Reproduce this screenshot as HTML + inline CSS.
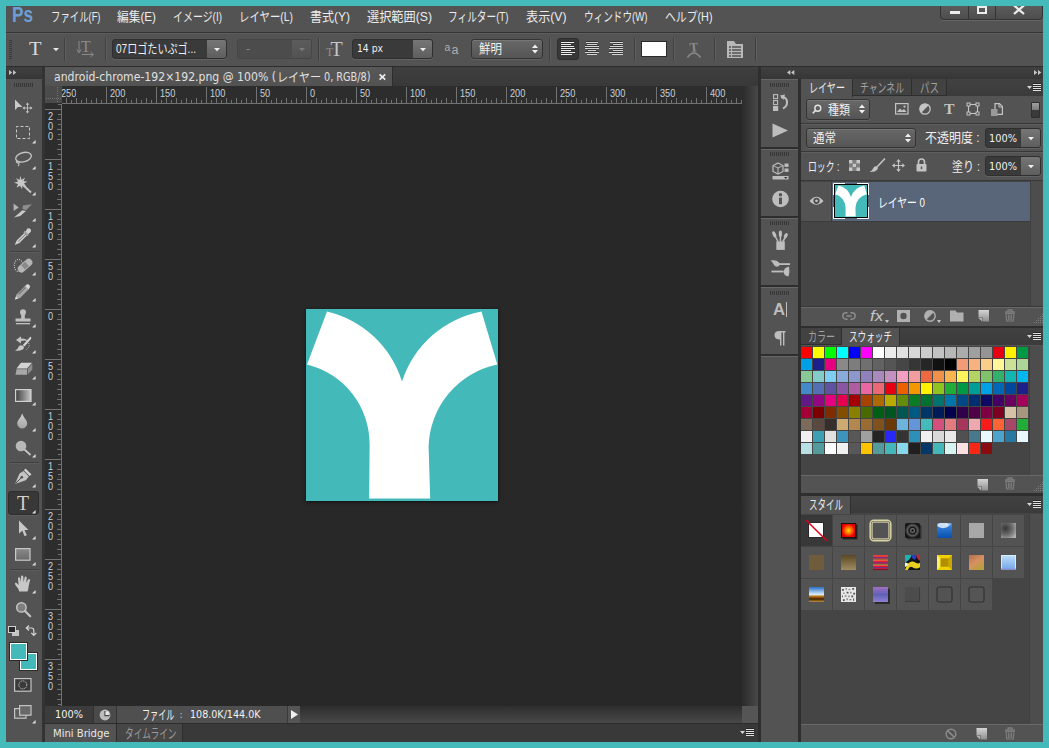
<!DOCTYPE html>
<html lang="ja"><head><meta charset="utf-8"><title>Photoshop</title>
<style>
html,body{margin:0;padding:0;}
body{width:1049px;height:748px;background:#44baba;overflow:hidden;position:relative;font-family:"Liberation Sans","Noto Sans CJK JP",sans-serif;}
#app div,#app svg,#app span{position:absolute;box-sizing:border-box;}
#app svg{overflow:visible;}
.t{white-space:nowrap;transform-origin:0 50%;display:block;}
</style></head>
<body><div id="app">
<div style="left:6px;top:6px;width:1037px;height:736px;background:#535353;"></div>
<div style="left:6px;top:32px;width:1037px;height:1px;background:#343434;"></div>
<span class="t" style="left:11.5px;top:0.5px;font-size:22px;line-height:28px;color:#6d9fd6;font-weight:bold;transform:scaleX(0.7800);">Ps</span>
<span class="t" style="left:51px;top:7.1px;font-size:13px;line-height:19px;color:#ececec;font-weight:normal;transform:scaleX(0.7215);">ファイル(F)</span>
<span class="t" style="left:117px;top:7.1px;font-size:13px;line-height:19px;color:#ececec;font-weight:normal;transform:scaleX(0.8998);">編集(E)</span>
<span class="t" style="left:172.5px;top:7.1px;font-size:13px;line-height:19px;color:#ececec;font-weight:normal;transform:scaleX(0.7654);">イメージ(I)</span>
<span class="t" style="left:239px;top:7.1px;font-size:13px;line-height:19px;color:#ececec;font-weight:normal;transform:scaleX(0.8000);">レイヤー(L)</span>
<span class="t" style="left:310px;top:7.1px;font-size:13px;line-height:19px;color:#ececec;font-weight:normal;transform:scaleX(0.9229);">書式(Y)</span>
<span class="t" style="left:367px;top:7.1px;font-size:13px;line-height:19px;color:#ececec;font-weight:normal;transform:scaleX(0.9374);">選択範囲(S)</span>
<span class="t" style="left:448px;top:7.1px;font-size:13px;line-height:19px;color:#ececec;font-weight:normal;transform:scaleX(0.7438);">フィルター(T)</span>
<span class="t" style="left:526px;top:7.1px;font-size:13px;line-height:19px;color:#ececec;font-weight:normal;transform:scaleX(0.9344);">表示(V)</span>
<span class="t" style="left:584px;top:7.1px;font-size:13px;line-height:19px;color:#ececec;font-weight:normal;transform:scaleX(0.7389);">ウィンドウ(W)</span>
<span class="t" style="left:665px;top:7.1px;font-size:13px;line-height:19px;color:#ececec;font-weight:normal;transform:scaleX(0.8326);">ヘルプ(H)</span>
<div style="left:940px;top:6px;width:103px;height:14px;border:1px solid #343434;border-top:none;border-radius:0 0 4px 4px;background:linear-gradient(#5c5c5c,#4d4d4d);box-shadow:0 1px 0 #676767;"></div>
<div style="left:968px;top:6px;width:1px;height:13px;background:#343434;"></div>
<div style="left:995px;top:6px;width:1px;height:13px;background:#343434;"></div>
<div style="left:950px;top:11px;width:10px;height:3px;background:#ececec;"></div>
<div style="left:977px;top:6px;width:10px;height:8px;border:2px solid #ececec;"></div>
<svg style="left:1013px;top:6px;overflow:hidden;" width="12" height="9" viewBox="0 0 12 9"><path d="M1 -0.6L11 8M11 -0.6L1 8" stroke="#ececec" stroke-width="2.3" fill="none"/></svg>
<div style="left:6px;top:66px;width:1037px;height:1px;background:#2c2c2c;"></div>
<div style="left:6px;top:33px;width:1037px;height:1px;background:#5e5e5e;"></div>
<div style="left:9px;top:40px;width:3px;height:20px;background:repeating-linear-gradient(#3a3a3a 0 1px,transparent 1px 2px);"></div>
<span class="t" style="left:28.6px;top:35.8px;font-size:19px;line-height:25px;color:#dcdcdc;font-weight:normal;font-family:'Liberation Serif',serif;transform:scaleX(1.0853);">T</span>
<svg style="left:52.5px;top:47.5px;" width="6" height="3" viewBox="0 0 6 3"><path d="M0 0H6L3 3.2Z" fill="#e6e6e6"/></svg>
<div style="left:64px;top:38px;width:1px;height:23px;background:#3f3f3f;"></div>
<div style="left:65px;top:38px;width:1px;height:23px;background:#5f5f5f;"></div>
<svg style="left:76px;top:40px;" width="20" height="18" viewBox="0 0 20 18"><text x="5" y="11.5" font-family="Liberation Serif,serif" font-size="16" fill="#8a8a8a">T</text><path d="M3 1V12.5M0.8 9.5L3 12.8L5.2 9.5" stroke="#8a8a8a" fill="none"/><path d="M6 14.5H17M14.5 12L17.5 14.5L14.5 17" stroke="#8a8a8a" fill="none"/></svg>
<div style="left:105px;top:38px;width:1px;height:23px;background:#3f3f3f;"></div>
<div style="left:106px;top:38px;width:1px;height:23px;background:#5f5f5f;"></div>
<div style="left:112px;top:39px;width:115px;height:20px;background:#3a3a3a;border:1px solid #2f2f2f;border-radius:3px;box-shadow:0 1px 0 #626262;"></div>
<div style="left:207px;top:40px;width:19px;height:18px;background:linear-gradient(#767676,#5e5e5e);border-radius:0 2px 2px 0;"></div>
<svg style="left:214px;top:47.5px;" width="6" height="3" viewBox="0 0 6 3"><path d="M0 0H6L3 3.2Z" fill="#f0f0f0"/></svg>
<span class="t" style="left:116px;top:39.0px;font-size:13px;line-height:19px;color:#f0f0f0;font-weight:normal;transform:scaleX(0.7745);">07ロゴたいぷゴ...</span>
<div style="left:237px;top:39px;width:75px;height:20px;background:#4c4c4c;border:1px solid #464646;border-radius:3px;"></div>
<div style="left:292px;top:40px;width:19px;height:18px;background:linear-gradient(#5c5c5c,#525252);border-radius:0 2px 2px 0;"></div>
<svg style="left:299px;top:47.5px;" width="6" height="3" viewBox="0 0 6 3"><path d="M0 0H6L3 3.2Z" fill="#7a7a7a"/></svg>
<span class="t" style="left:246px;top:39.5px;font-size:12px;line-height:18px;color:#8a8a8a;font-weight:normal;transform:scaleX(1.0000);">-</span>
<div style="left:318px;top:38px;width:1px;height:23px;background:#3f3f3f;"></div>
<div style="left:319px;top:38px;width:1px;height:23px;background:#5f5f5f;"></div>
<svg style="left:326px;top:40px;" width="20" height="18" viewBox="0 0 20 18"><text x="0" y="16" font-family="Liberation Serif,serif" font-size="12" fill="#8f8f8f">T</text><text x="4.5" y="16" font-family="Liberation Serif,serif" font-size="20" fill="#c4c4c4">T</text></svg>
<div style="left:352px;top:39px;width:81px;height:20px;background:#3a3a3a;border:1px solid #2f2f2f;border-radius:3px;box-shadow:0 1px 0 #626262;"></div>
<div style="left:413px;top:40px;width:19px;height:18px;background:linear-gradient(#767676,#5e5e5e);border-radius:0 2px 2px 0;"></div>
<svg style="left:420px;top:47.5px;" width="6" height="3" viewBox="0 0 6 3"><path d="M0 0H6L3 3.2Z" fill="#f0f0f0"/></svg>
<span class="t" style="left:357px;top:40.2px;font-size:11px;line-height:17px;color:#f0f0f0;font-weight:normal;font-family:'DejaVu Sans','Liberation Sans','Noto Sans CJK JP',sans-serif;transform:scaleX(0.8387);">14 px</span>
<svg style="left:444px;top:41px;" width="16" height="16" viewBox="0 0 16 16"><text x="0.5" y="10" font-family="Liberation Sans,sans-serif" font-size="10.5" fill="#b0b0b0">a</text><text x="7.5" y="13.3" font-family="Liberation Sans,sans-serif" font-size="12.5" fill="#b0b0b0">a</text></svg>
<div style="left:471px;top:39px;width:72px;height:20px;border:1px solid #343434;border-radius:3px;background:linear-gradient(#686868,#555555);box-shadow:0 1px 0 #626262, inset 0 1px 0 #767676;"></div>
<svg style="left:532px;top:44px;" width="6" height="10" viewBox="0 0 6 10"><path d="M0 4L3 0.5L6 4ZM0 6L3 9.5L6 6Z" fill="#f0f0f0"/></svg>
<span class="t" style="left:479px;top:39.0px;font-size:13px;line-height:19px;color:#f0f0f0;font-weight:normal;transform:scaleX(0.8841);">鮮明</span>
<div style="left:549px;top:38px;width:1px;height:23px;background:#3f3f3f;"></div>
<div style="left:550px;top:38px;width:1px;height:23px;background:#5f5f5f;"></div>
<div style="left:557px;top:38px;width:22px;height:22px;background:#383838;border-radius:3px;border:1px solid #2e2e2e;"></div>
<svg style="left:561px;top:42px;shape-rendering:crispEdges;" width="14" height="14" viewBox="0 0 14 14"><rect x="0" y="-1" width="13" height="1" fill="#2c2c2c" opacity=".75"/><rect x="0" y="0" width="13" height="1" fill="#ececec"/><rect x="0" y="1" width="10" height="1" fill="#2c2c2c" opacity=".75"/><rect x="0" y="2" width="10" height="1" fill="#ececec"/><rect x="0" y="3" width="13" height="1" fill="#2c2c2c" opacity=".75"/><rect x="0" y="4" width="13" height="1" fill="#ececec"/><rect x="0" y="5" width="14" height="1" fill="#2c2c2c" opacity=".75"/><rect x="0" y="6" width="14" height="1" fill="#ececec"/><rect x="0" y="7" width="10" height="1" fill="#2c2c2c" opacity=".75"/><rect x="0" y="8" width="10" height="1" fill="#ececec"/><rect x="0" y="9" width="14" height="1" fill="#2c2c2c" opacity=".75"/><rect x="0" y="10" width="14" height="1" fill="#ececec"/><rect x="0" y="11" width="11" height="1" fill="#2c2c2c" opacity=".75"/><rect x="0" y="12" width="11" height="1" fill="#ececec"/></svg>
<svg style="left:585px;top:42px;shape-rendering:crispEdges;" width="14" height="14" viewBox="0 0 14 14"><rect x="1.0" y="-1" width="12" height="1" fill="#2c2c2c" opacity=".75"/><rect x="1.0" y="0" width="12" height="1" fill="#d4d4d4"/><rect x="2.0" y="1" width="10" height="1" fill="#2c2c2c" opacity=".75"/><rect x="2.0" y="2" width="10" height="1" fill="#d4d4d4"/><rect x="0.0" y="3" width="14" height="1" fill="#2c2c2c" opacity=".75"/><rect x="0.0" y="4" width="14" height="1" fill="#d4d4d4"/><rect x="0.0" y="5" width="14" height="1" fill="#2c2c2c" opacity=".75"/><rect x="0.0" y="6" width="14" height="1" fill="#d4d4d4"/><rect x="3.0" y="7" width="8" height="1" fill="#2c2c2c" opacity=".75"/><rect x="3.0" y="8" width="8" height="1" fill="#d4d4d4"/><rect x="0.0" y="9" width="14" height="1" fill="#2c2c2c" opacity=".75"/><rect x="0.0" y="10" width="14" height="1" fill="#d4d4d4"/><rect x="2.0" y="11" width="10" height="1" fill="#2c2c2c" opacity=".75"/><rect x="2.0" y="12" width="10" height="1" fill="#d4d4d4"/></svg>
<svg style="left:609px;top:42px;shape-rendering:crispEdges;" width="14" height="14" viewBox="0 0 14 14"><rect x="1" y="-1" width="13" height="1" fill="#2c2c2c" opacity=".75"/><rect x="1" y="0" width="13" height="1" fill="#d4d4d4"/><rect x="4" y="1" width="10" height="1" fill="#2c2c2c" opacity=".75"/><rect x="4" y="2" width="10" height="1" fill="#d4d4d4"/><rect x="1" y="3" width="13" height="1" fill="#2c2c2c" opacity=".75"/><rect x="1" y="4" width="13" height="1" fill="#d4d4d4"/><rect x="0" y="5" width="14" height="1" fill="#2c2c2c" opacity=".75"/><rect x="0" y="6" width="14" height="1" fill="#d4d4d4"/><rect x="4" y="7" width="10" height="1" fill="#2c2c2c" opacity=".75"/><rect x="4" y="8" width="10" height="1" fill="#d4d4d4"/><rect x="0" y="9" width="14" height="1" fill="#2c2c2c" opacity=".75"/><rect x="0" y="10" width="14" height="1" fill="#d4d4d4"/><rect x="3" y="11" width="11" height="1" fill="#2c2c2c" opacity=".75"/><rect x="3" y="12" width="11" height="1" fill="#d4d4d4"/></svg>
<div style="left:634px;top:38px;width:1px;height:23px;background:#3f3f3f;"></div>
<div style="left:635px;top:38px;width:1px;height:23px;background:#5f5f5f;"></div>
<div style="left:641px;top:41px;width:26px;height:16px;background:#ffffff;border:1px solid #2a2a2a;"></div>
<div style="left:673px;top:38px;width:1px;height:23px;background:#3f3f3f;"></div>
<div style="left:674px;top:38px;width:1px;height:23px;background:#5f5f5f;"></div>
<svg style="left:686px;top:40px;" width="16" height="18" viewBox="0 0 16 18"><text x="3.5" y="11.5" font-family="Liberation Serif,serif" font-size="13" font-weight="bold" fill="#8c8c8c" transform="rotate(-6 8 8)">T</text><path d="M1.5 17.5Q8 8.5 14.5 17.5" stroke="#8c8c8c" fill="none" stroke-width="1.5"/></svg>
<div style="left:714px;top:38px;width:1px;height:23px;background:#3f3f3f;"></div>
<div style="left:715px;top:38px;width:1px;height:23px;background:#5f5f5f;"></div>
<svg style="left:727px;top:41px;" width="17" height="17" viewBox="0 0 17 17"><path d="M0 0H7L9 3H16V17H0Z" fill="#b8b8b8"/><path d="M2 6H14M2 9H14M2 12H14M2 15H14" stroke="#535353" stroke-width="1.4"/><path d="M4.5 5V16" stroke="#b8b8b8" stroke-width="1"/></svg>
<div style="left:755px;top:38px;width:1px;height:23px;background:#3f3f3f;"></div>
<div style="left:756px;top:38px;width:1px;height:23px;background:#5f5f5f;"></div>
<div style="left:6px;top:67px;width:37px;height:12px;background:linear-gradient(#404040,#363636);"></div>
<div style="left:42px;top:67px;width:3px;height:675px;background:#333333;"></div>
<svg style="left:9px;top:70px;" width="8" height="5" viewBox="0 0 8 5"><path d="M0 0L3.3 2.5L0 5ZM4 0L7.3 2.5L4 5Z" fill="#c0c0c0"/></svg>
<div style="left:14px;top:83px;width:20px;height:4px;background:repeating-linear-gradient(90deg,#363636 0 1px,transparent 1px 2px);"></div>
<svg style="left:14px;top:98px;" width="20" height="16" viewBox="0 0 20 16"><path d="M1 1.5L1 12L4 9L8.5 9Z" fill="#c8c8c8"/><path d="M13.5 5.5V14.5M9 10H18" stroke="#b8b8b8" stroke-width="1"/><path d="M13.5 4.5L11.7 6.8H15.3ZM13.5 15.5L11.7 13.2H15.3ZM8.5 10L10.8 8.2V11.8ZM18.5 10L16.2 8.2V11.8Z" fill="#c0c0c0"/></svg>
<svg style="left:16px;top:126px;" width="14" height="13" viewBox="0 0 14 13"><rect x="0.5" y="0.5" width="13" height="12" fill="none" stroke="#c8c8c8" stroke-width="1" stroke-dasharray="3 2" stroke-dashoffset="1"/></svg>
<svg style="left:32px;top:140px;" width="4" height="4" viewBox="0 0 4 4"><path d="M3.6 0V3.6H0Z" fill="#dcdcdc"/></svg>
<svg style="left:14px;top:151px;" width="19" height="16" viewBox="0 0 19 16"><ellipse cx="9.5" cy="6.2" rx="8" ry="4.6" fill="none" stroke="#c4c4c4" stroke-width="1.4" transform="rotate(-14 9.5 6.2)"/><path d="M3 9.5Q1.5 11 3.5 12Q5.5 12.5 5 10.5M4.8 12Q5.5 14 4 15" fill="none" stroke="#c4c4c4" stroke-width="1.1"/></svg>
<svg style="left:32px;top:166px;" width="4" height="4" viewBox="0 0 4 4"><path d="M3.6 0V3.6H0Z" fill="#dcdcdc"/></svg>
<svg style="left:13px;top:176px;" width="20" height="18" viewBox="0 0 20 18"><path d="M7.5 0L8.6 4L12 1.6L10.6 5.2L14.5 5.5L11 7.4L13.4 10.6L9.6 9.3L9 13L7 9.7L3.6 11.6L5 8L1 6.8L5 5.6L3 2L6.4 4Z" fill="#c8c8c8"/><path d="M10 9L18 16.5" stroke="#c8c8c8" stroke-width="1.8"/></svg>
<svg style="left:32px;top:192px;" width="4" height="4" viewBox="0 0 4 4"><path d="M3.6 0V3.6H0Z" fill="#dcdcdc"/></svg>
<svg style="left:13px;top:203px;" width="20" height="16" viewBox="0 0 20 16"><path d="M0.6 0.6L5.7 4.5L0.6 7.9Z" fill="#b4b4b4"/><path d="M9.8 2.5L18.9 1.3L13.1 7.2L9.4 5.7Z" fill="#8e8e8e"/><path d="M1 14.4L9.4 7.3L13 7.9L7.2 13.1Z" fill="#cacaca"/></svg>
<svg style="left:32px;top:218px;" width="4" height="4" viewBox="0 0 4 4"><path d="M3.6 0V3.6H0Z" fill="#dcdcdc"/></svg>
<svg style="left:15px;top:228px;" width="17" height="17" viewBox="0 0 17 17"><path d="M12.5 0.5Q15 -0.5 16 2Q16.5 4 14.5 5L13 6.5L10.2 3.7L11.5 2.2Q11.5 1 12.5 0.5Z" fill="#d0d0d0"/><path d="M9 3.5L13 7.5" stroke="#a0a0a0" stroke-width="2"/><path d="M9.8 5.5L2.5 12.8L1.2 15.5L4 14.3L11.3 7" fill="#6a6a6a" stroke="#d0d0d0" stroke-width="1.5"/></svg>
<svg style="left:32px;top:244px;" width="4" height="4" viewBox="0 0 4 4"><path d="M3.6 0V3.6H0Z" fill="#dcdcdc"/></svg>
<div style="left:10px;top:251px;width:29px;height:1px;background:#404040;"></div>
<div style="left:10px;top:252px;width:29px;height:1px;background:#5c5c5c;"></div>
<svg style="left:14px;top:257px;" width="19" height="18" viewBox="0 0 19 18"><ellipse cx="4.5" cy="8.5" rx="4.2" ry="6" fill="none" stroke="#d0d0d0" stroke-width="1.1" stroke-dasharray="1 1.2"/><rect x="2.6" y="5" width="17" height="7.4" rx="3.7" fill="#b4b4b4" transform="rotate(-42 11 8.7)"/><rect x="8.4" y="5.8" width="5.4" height="5.8" fill="#8a8a8a" transform="rotate(-42 11 8.7)"/></svg>
<svg style="left:32px;top:272px;" width="4" height="4" viewBox="0 0 4 4"><path d="M3.6 0V3.6H0Z" fill="#dcdcdc"/></svg>
<svg style="left:14px;top:283px;" width="18" height="18" viewBox="0 0 18 18"><path d="M1 16.5L2.5 11.5L11 3L14.5 6.5L6 15Z" fill="#a8a8a8"/><path d="M1 16.5L2 13.5L4 15.5Z" fill="#e8e8e8"/><path d="M11.8 2.2Q13.5 0.2 15.4 2Q17 3.8 15.2 5.6L14.5 6.4L11 3Z" fill="#d8d8d8"/><path d="M4.5 11.5L11.5 4.5" stroke="#7a7a7a" stroke-width="1.2"/></svg>
<svg style="left:32px;top:298px;" width="4" height="4" viewBox="0 0 4 4"><path d="M3.6 0V3.6H0Z" fill="#dcdcdc"/></svg>
<svg style="left:15px;top:309px;" width="16" height="17" viewBox="0 0 16 17"><path d="M8 0.3Q11 0.3 11 3.2Q11 5 9.8 6.3V9.5H15.5V12.5H0.5V9.5H6.2V6.3Q5 5 5 3.2Q5 0.3 8 0.3Z" fill="#c0c0c0"/><rect x="1" y="14" width="14" height="1.3" fill="#c0c0c0"/></svg>
<svg style="left:32px;top:324px;" width="4" height="4" viewBox="0 0 4 4"><path d="M3.6 0V3.6H0Z" fill="#dcdcdc"/></svg>
<svg style="left:14px;top:335px;" width="19" height="17" viewBox="0 0 19 17"><path d="M2 5L7 1.2V3.6Q12 3 14 6Q11 5 7 6V8.6Z" fill="#c4c4c4"/><path d="M16.5 1.5Q18 2.5 17 4L10.5 11.5L8.8 10Z" fill="#d4d4d4"/><path d="M8.5 10.5Q10.5 11.5 10 13Q8 16.5 1 15.5Q4 14 4.5 12Q5.5 9.5 8.5 10.5Z" fill="#c8c8c8"/><path d="M14.5 8Q16.5 12 12.5 14.5" fill="none" stroke="#d0d0d0" stroke-width="1" stroke-dasharray="1 1.2"/></svg>
<svg style="left:32px;top:350px;" width="4" height="4" viewBox="0 0 4 4"><path d="M3.6 0V3.6H0Z" fill="#dcdcdc"/></svg>
<svg style="left:15px;top:362px;" width="18" height="14" viewBox="0 0 18 14"><path d="M6 0.8H17L12 6.5H1.5Z" fill="#d4d4d4"/><path d="M1.5 7.2H12V12.8H0.5Z" fill="#a8a8a8"/><path d="M12.8 6.8L17.3 1.5V7.5L12.8 12.6Z" fill="#8c8c8c"/></svg>
<svg style="left:32px;top:376px;" width="4" height="4" viewBox="0 0 4 4"><path d="M3.6 0V3.6H0Z" fill="#dcdcdc"/></svg>
<svg style="left:15px;top:389px;" width="17" height="13" viewBox="0 0 17 13"><defs><linearGradient id="gg"><stop offset="0" stop-color="#3c3c3c"/><stop offset="1" stop-color="#c8c8c8"/></linearGradient></defs><rect x="0.6" y="0.6" width="15.4" height="11.8" fill="url(#gg)" stroke="#d0d0d0" stroke-width="1.2"/></svg>
<svg style="left:32px;top:402px;" width="4" height="4" viewBox="0 0 4 4"><path d="M3.6 0V3.6H0Z" fill="#dcdcdc"/></svg>
<svg style="left:16px;top:413px;" width="13" height="16" viewBox="0 0 13 16"><defs><linearGradient id="gd" x2="0" y2="1"><stop offset="0" stop-color="#d0d0d0"/><stop offset="1" stop-color="#a4a4a4"/></linearGradient></defs><path d="M6.2 0.5Q7.5 4 10.2 7.2Q12 10 10.8 12.6Q9.4 15.4 6.2 15.4Q3 15.4 1.6 12.6Q0.4 10 2.2 7.2Q5 4 6.2 0.5Z" fill="url(#gd)"/></svg>
<svg style="left:32px;top:428px;" width="4" height="4" viewBox="0 0 4 4"><path d="M3.6 0V3.6H0Z" fill="#dcdcdc"/></svg>
<svg style="left:15px;top:440px;" width="17" height="17" viewBox="0 0 17 17"><circle cx="6" cy="6" r="5.3" fill="#b8b8b8"/><path d="M9.5 9.5L15.5 15" stroke="#c4c4c4" stroke-width="1.8"/></svg>
<svg style="left:32px;top:454px;" width="4" height="4" viewBox="0 0 4 4"><path d="M3.6 0V3.6H0Z" fill="#dcdcdc"/></svg>
<div style="left:10px;top:462px;width:29px;height:1px;background:#404040;"></div>
<div style="left:10px;top:463px;width:29px;height:1px;background:#5c5c5c;"></div>
<svg style="left:14px;top:467px;" width="19" height="18" viewBox="0 0 19 18"><path d="M11.5 1.5L17.5 7.5L15.5 9L10 3.2Z" fill="#d4d4d4"/><path d="M9.6 4L14.8 9.4L11.8 13.2L1 17L5.5 6.5Z" fill="#c4c4c4"/><path d="M1.5 16.5L7.2 10.8" stroke="#4a4a4a" stroke-width="1"/><circle cx="7.8" cy="10.2" r="1.3" fill="#4a4a4a"/></svg>
<svg style="left:32px;top:484px;" width="4" height="4" viewBox="0 0 4 4"><path d="M3.6 0V3.6H0Z" fill="#dcdcdc"/></svg>
<div style="left:8px;top:491px;width:31px;height:24px;background:#383838;border:1px solid #2d2d2d;border-radius:3px;box-shadow:0 1px 0 #5e5e5e;"></div>
<span class="t" style="left:17px;top:489.5px;font-size:20px;line-height:26px;color:#d0d0d0;font-weight:normal;font-family:'Liberation Serif',serif;transform:scaleX(0.9821);">T</span>
<svg style="left:32px;top:510px;" width="4" height="4" viewBox="0 0 4 4"><path d="M3.6 0V3.6H0Z" fill="#dcdcdc"/></svg>
<svg style="left:18px;top:520px;" width="12" height="17" viewBox="0 0 12 17"><path d="M1 0.5V13.5L4.3 10.8L6.6 16.3L8.8 15.3L6.5 10H10.5Z" fill="#c8c8c8"/></svg>
<svg style="left:32px;top:536px;" width="4" height="4" viewBox="0 0 4 4"><path d="M3.6 0V3.6H0Z" fill="#dcdcdc"/></svg>
<svg style="left:15px;top:548px;" width="16" height="13" viewBox="0 0 16 13"><defs><linearGradient id="gr" x2="0" y2="1"><stop offset="0" stop-color="#8a8a8a"/><stop offset="1" stop-color="#6a6a6a"/></linearGradient></defs><rect x="0.6" y="0.6" width="14.4" height="11.6" fill="url(#gr)" stroke="#c8c8c8" stroke-width="1.2"/></svg>
<svg style="left:32px;top:562px;" width="4" height="4" viewBox="0 0 4 4"><path d="M3.6 0V3.6H0Z" fill="#dcdcdc"/></svg>
<div style="left:10px;top:569px;width:29px;height:1px;background:#404040;"></div>
<div style="left:10px;top:570px;width:29px;height:1px;background:#5c5c5c;"></div>
<svg style="left:14px;top:575px;" width="18" height="17" viewBox="0 0 18 17"><path d="M5.2 16.5Q4.6 13.5 1.8 10.5Q0.2 8.4 1.2 7.8Q2.4 7.2 4.6 10L4 3.4Q4 2.2 5 2.2Q6 2.2 6.2 3.4L6.8 7.4L7 1.8Q7 0.6 8.1 0.6Q9.2 0.6 9.3 1.8L9.6 7.2L10.6 2.4Q10.8 1.4 11.8 1.5Q12.8 1.7 12.7 2.8L12.3 8L14 4.6Q14.5 3.7 15.4 4Q16.2 4.4 16 5.4Q14.8 9.5 14.6 11.8Q14.4 14.4 13.6 16.5Z" fill="#c8c8c8"/></svg>
<svg style="left:32px;top:590px;" width="4" height="4" viewBox="0 0 4 4"><path d="M3.6 0V3.6H0Z" fill="#dcdcdc"/></svg>
<svg style="left:15px;top:601px;" width="17" height="17" viewBox="0 0 17 17"><circle cx="6.4" cy="6.4" r="4.7" fill="#7e7e7e" stroke="#c4c4c4" stroke-width="1.5"/><path d="M10 10L15.2 15.2" stroke="#c4c4c4" stroke-width="2.2" stroke-linecap="round"/></svg>
<div style="left:12px;top:630px;width:7px;height:6px;background:#c4c4c4;"></div>
<div style="left:8px;top:626px;width:8px;height:7px;background:#2a2a2a;border:1px solid #d0d0d0;"></div>
<svg style="left:26px;top:625px;" width="11" height="11" viewBox="0 0 11 11"><path d="M3 0.5L0.3 3L3 5.5M0.8 3H5.5Q7.8 3 7.8 5.5V10M5.3 7.8L7.8 10.4L10.3 7.8" stroke="#d4d4d4" stroke-width="1.2" fill="none"/></svg>
<div style="left:20px;top:653px;width:17px;height:17px;background:#44b9ba;border:1px solid #fff;outline:1px solid #2a2a2a;"></div>
<div style="left:10px;top:643px;width:17px;height:17px;background:#44b9ba;border:1px solid #fff;outline:1px solid #2a2a2a;"></div>
<svg style="left:14px;top:678px;" width="18" height="14" viewBox="0 0 18 14"><rect x="0.6" y="0.6" width="16.4" height="12.6" fill="#3a3a3a" stroke="#c4c4c4" stroke-width="1.2"/><circle cx="8.8" cy="6.9" r="4" fill="none" stroke="#e8e8e8" stroke-width="1" stroke-dasharray="1 1.1"/></svg>
<svg style="left:14px;top:705px;" width="18" height="15" viewBox="0 0 18 15"><rect x="0.6" y="3.6" width="11.4" height="9.6" fill="#5e5e5e" stroke="#c4c4c4" stroke-width="1.2"/><rect x="5.6" y="0.6" width="11.4" height="9.6" fill="#686868" stroke="#c4c4c4" stroke-width="1.2"/></svg>
<svg style="left:32px;top:720px;" width="4" height="4" viewBox="0 0 4 4"><path d="M3.6 0V3.6H0Z" fill="#dcdcdc"/></svg>
<div style="left:45px;top:67px;width:713px;height:20px;background:linear-gradient(#3f3f3f,#383838);"></div>
<div style="left:45px;top:67px;width:348px;height:20px;background:linear-gradient(#585858,#525252);border-right:1px solid #2e2e2e;"></div>
<span class="t" style="left:54px;top:69.2px;font-size:11.5px;line-height:17.5px;color:#e0e0e0;font-weight:normal;font-family:'DejaVu Sans','Liberation Sans','Noto Sans CJK JP',sans-serif;transform:scaleX(0.9476);">android-chrome-192×192.png @ 100% (</span>
<span class="t" style="left:276.5px;top:68.8px;font-size:12.5px;line-height:18.5px;color:#e4e4e4;font-weight:normal;transform:scaleX(0.8864);">レイヤー</span>
<span class="t" style="left:324px;top:69.2px;font-size:11.5px;line-height:17.5px;color:#e0e0e0;font-weight:normal;font-family:'DejaVu Sans','Liberation Sans','Noto Sans CJK JP',sans-serif;transform:scaleX(0.8438);">0, RGB/8)</span>
<svg style="left:378.5px;top:73.5px;" width="7" height="6" viewBox="0 0 7 6"><path d="M0.6 0.4L6.2 5.6M6.2 0.4L0.6 5.6" stroke="#f0f0f0" stroke-width="1.6"/></svg>
<div style="left:758px;top:67px;width:3px;height:675px;background:#2e2e2e;"></div>
<div style="left:45px;top:86px;width:713px;height:18px;background:#2d2d2d;"></div>
<div style="left:45px;top:86px;width:17px;height:637px;background:#2d2d2d;"></div>
<div style="left:45px;top:86px;width:17px;height:17px;background:#4b4b4b;"></div>
<svg style="left:45px;top:86px;" width="17" height="17" viewBox="0 0 17 17"><path d="M12.5 1V16M1 12.5H16" stroke="#6e6e6e" stroke-width="1" stroke-dasharray="1 1"/></svg>
<div style="left:62px;top:104px;width:680px;height:602px;background:#282828;"></div>
<svg style="left:0px;top:0px;" width="1049" height="748" viewBox="0 0 1049 748"><path d="M66.5 98V103M71.5 100V103M76.5 98V103M81.5 100V103M86.5 98V103M91.5 100V103M96.5 98V103M101.5 100V103M106.5 87V103M111.5 100V103M116.5 98V103M121.5 100V103M126.5 98V103M131.5 100V103M136.5 98V103M141.5 100V103M146.5 98V103M151.5 100V103M156.5 87V103M161.5 100V103M166.5 98V103M171.5 100V103M176.5 98V103M181.5 100V103M186.5 98V103M191.5 100V103M196.5 98V103M201.5 100V103M206.5 87V103M211.5 100V103M216.5 98V103M221.5 100V103M226.5 98V103M231.5 100V103M236.5 98V103M241.5 100V103M246.5 98V103M251.5 100V103M256.5 87V103M261.5 100V103M266.5 98V103M271.5 100V103M276.5 98V103M281.5 100V103M286.5 98V103M291.5 100V103M296.5 98V103M301.5 100V103M306.5 87V103M311.5 100V103M316.5 98V103M321.5 100V103M326.5 98V103M331.5 100V103M336.5 98V103M341.5 100V103M346.5 98V103M351.5 100V103M356.5 87V103M361.5 100V103M366.5 98V103M371.5 100V103M376.5 98V103M381.5 100V103M386.5 98V103M391.5 100V103M396.5 98V103M401.5 100V103M406.5 87V103M411.5 100V103M416.5 98V103M421.5 100V103M426.5 98V103M431.5 100V103M436.5 98V103M441.5 100V103M446.5 98V103M451.5 100V103M456.5 87V103M461.5 100V103M466.5 98V103M471.5 100V103M476.5 98V103M481.5 100V103M486.5 98V103M491.5 100V103M496.5 98V103M501.5 100V103M506.5 87V103M511.5 100V103M516.5 98V103M521.5 100V103M526.5 98V103M531.5 100V103M536.5 98V103M541.5 100V103M546.5 98V103M551.5 100V103M556.5 87V103M561.5 100V103M566.5 98V103M571.5 100V103M576.5 98V103M581.5 100V103M586.5 98V103M591.5 100V103M596.5 98V103M601.5 100V103M606.5 87V103M611.5 100V103M616.5 98V103M621.5 100V103M626.5 98V103M631.5 100V103M636.5 98V103M641.5 100V103M646.5 98V103M651.5 100V103M656.5 87V103M661.5 100V103M666.5 98V103M671.5 100V103M676.5 98V103M681.5 100V103M686.5 98V103M691.5 100V103M696.5 98V103M701.5 100V103M706.5 87V103M711.5 100V103M716.5 98V103M721.5 100V103M726.5 98V103M731.5 100V103M736.5 98V103M741.5 100V103" stroke="#727272" stroke-width="1" fill="none" shape-rendering="crispEdges"/><path d="M62 103.5H742M61.5 104V706" stroke="#727272" stroke-width="1" fill="none" shape-rendering="crispEdges"/></svg>
<svg style="left:0px;top:0px;" width="1049" height="748" viewBox="0 0 1049 748"><path d="M58 104.5H61M45 109.5H61M58 114.5H61M56.5 119.5H61M58 124.5H61M56.5 129.5H61M58 134.5H61M56.5 139.5H61M58 144.5H61M56.5 149.5H61M58 154.5H61M45 159.5H61M58 164.5H61M56.5 169.5H61M58 174.5H61M56.5 179.5H61M58 184.5H61M56.5 189.5H61M58 194.5H61M56.5 199.5H61M58 204.5H61M45 209.5H61M58 214.5H61M56.5 219.5H61M58 224.5H61M56.5 229.5H61M58 234.5H61M56.5 239.5H61M58 244.5H61M56.5 249.5H61M58 254.5H61M45 259.5H61M58 264.5H61M56.5 269.5H61M58 274.5H61M56.5 279.5H61M58 284.5H61M56.5 289.5H61M58 294.5H61M56.5 299.5H61M58 304.5H61M45 309.5H61M58 314.5H61M56.5 319.5H61M58 324.5H61M56.5 329.5H61M58 334.5H61M56.5 339.5H61M58 344.5H61M56.5 349.5H61M58 354.5H61M45 359.5H61M58 364.5H61M56.5 369.5H61M58 374.5H61M56.5 379.5H61M58 384.5H61M56.5 389.5H61M58 394.5H61M56.5 399.5H61M58 404.5H61M45 409.5H61M58 414.5H61M56.5 419.5H61M58 424.5H61M56.5 429.5H61M58 434.5H61M56.5 439.5H61M58 444.5H61M56.5 449.5H61M58 454.5H61M45 459.5H61M58 464.5H61M56.5 469.5H61M58 474.5H61M56.5 479.5H61M58 484.5H61M56.5 489.5H61M58 494.5H61M56.5 499.5H61M58 504.5H61M45 509.5H61M58 514.5H61M56.5 519.5H61M58 524.5H61M56.5 529.5H61M58 534.5H61M56.5 539.5H61M58 544.5H61M56.5 549.5H61M58 554.5H61M45 559.5H61M58 564.5H61M56.5 569.5H61M58 574.5H61M56.5 579.5H61M58 584.5H61M56.5 589.5H61M58 594.5H61M56.5 599.5H61M58 604.5H61M45 609.5H61M58 614.5H61M56.5 619.5H61M58 624.5H61M56.5 629.5H61M58 634.5H61M56.5 639.5H61M58 644.5H61M56.5 649.5H61M58 654.5H61M45 659.5H61M58 664.5H61M56.5 669.5H61M58 674.5H61M56.5 679.5H61M58 684.5H61M56.5 689.5H61M58 694.5H61M56.5 699.5H61M58 704.5H61" stroke="#727272" stroke-width="1" fill="none" shape-rendering="crispEdges"/></svg>
<span class="t" style="left:60.7px;top:87.8px;font-size:10.5px;line-height:11px;color:#c8d0d8;transform:scaleX(.876);clip-path:inset(0 0 0 1px);">250</span>
<span class="t" style="left:110px;top:87.8px;font-size:10.5px;line-height:11px;color:#c8d0d8;transform:scaleX(.876);">200</span>
<span class="t" style="left:160px;top:87.8px;font-size:10.5px;line-height:11px;color:#c8d0d8;transform:scaleX(.876);">150</span>
<span class="t" style="left:210px;top:87.8px;font-size:10.5px;line-height:11px;color:#c8d0d8;transform:scaleX(.876);">100</span>
<span class="t" style="left:260px;top:87.8px;font-size:10.5px;line-height:11px;color:#c8d0d8;transform:scaleX(.876);">50</span>
<span class="t" style="left:310px;top:87.8px;font-size:10.5px;line-height:11px;color:#c8d0d8;transform:scaleX(.876);">0</span>
<span class="t" style="left:360px;top:87.8px;font-size:10.5px;line-height:11px;color:#c8d0d8;transform:scaleX(.876);">50</span>
<span class="t" style="left:410px;top:87.8px;font-size:10.5px;line-height:11px;color:#c8d0d8;transform:scaleX(.876);">100</span>
<span class="t" style="left:460px;top:87.8px;font-size:10.5px;line-height:11px;color:#c8d0d8;transform:scaleX(.876);">150</span>
<span class="t" style="left:510px;top:87.8px;font-size:10.5px;line-height:11px;color:#c8d0d8;transform:scaleX(.876);">200</span>
<span class="t" style="left:560px;top:87.8px;font-size:10.5px;line-height:11px;color:#c8d0d8;transform:scaleX(.876);">250</span>
<span class="t" style="left:610px;top:87.8px;font-size:10.5px;line-height:11px;color:#c8d0d8;transform:scaleX(.876);">300</span>
<span class="t" style="left:660px;top:87.8px;font-size:10.5px;line-height:11px;color:#c8d0d8;transform:scaleX(.876);">350</span>
<span class="t" style="left:710px;top:87.8px;font-size:10.5px;line-height:11px;color:#c8d0d8;transform:scaleX(.876);">400</span>
<span class="t" style="left:47.8px;top:110.9px;font-size:10.5px;line-height:11px;color:#c8d0d8;transform:scaleX(.876);">2</span>
<span class="t" style="left:47.8px;top:120.9px;font-size:10.5px;line-height:11px;color:#c8d0d8;transform:scaleX(.876);">0</span>
<span class="t" style="left:47.8px;top:130.9px;font-size:10.5px;line-height:11px;color:#c8d0d8;transform:scaleX(.876);">0</span>
<span class="t" style="left:47.8px;top:160.9px;font-size:10.5px;line-height:11px;color:#c8d0d8;transform:scaleX(.876);">1</span>
<span class="t" style="left:47.8px;top:170.9px;font-size:10.5px;line-height:11px;color:#c8d0d8;transform:scaleX(.876);">5</span>
<span class="t" style="left:47.8px;top:180.9px;font-size:10.5px;line-height:11px;color:#c8d0d8;transform:scaleX(.876);">0</span>
<span class="t" style="left:47.8px;top:210.9px;font-size:10.5px;line-height:11px;color:#c8d0d8;transform:scaleX(.876);">1</span>
<span class="t" style="left:47.8px;top:220.9px;font-size:10.5px;line-height:11px;color:#c8d0d8;transform:scaleX(.876);">0</span>
<span class="t" style="left:47.8px;top:230.9px;font-size:10.5px;line-height:11px;color:#c8d0d8;transform:scaleX(.876);">0</span>
<span class="t" style="left:47.8px;top:260.9px;font-size:10.5px;line-height:11px;color:#c8d0d8;transform:scaleX(.876);">5</span>
<span class="t" style="left:47.8px;top:270.9px;font-size:10.5px;line-height:11px;color:#c8d0d8;transform:scaleX(.876);">0</span>
<span class="t" style="left:47.8px;top:310.9px;font-size:10.5px;line-height:11px;color:#c8d0d8;transform:scaleX(.876);">0</span>
<span class="t" style="left:47.8px;top:360.9px;font-size:10.5px;line-height:11px;color:#c8d0d8;transform:scaleX(.876);">5</span>
<span class="t" style="left:47.8px;top:370.9px;font-size:10.5px;line-height:11px;color:#c8d0d8;transform:scaleX(.876);">0</span>
<span class="t" style="left:47.8px;top:410.9px;font-size:10.5px;line-height:11px;color:#c8d0d8;transform:scaleX(.876);">1</span>
<span class="t" style="left:47.8px;top:420.9px;font-size:10.5px;line-height:11px;color:#c8d0d8;transform:scaleX(.876);">0</span>
<span class="t" style="left:47.8px;top:430.9px;font-size:10.5px;line-height:11px;color:#c8d0d8;transform:scaleX(.876);">0</span>
<span class="t" style="left:47.8px;top:460.9px;font-size:10.5px;line-height:11px;color:#c8d0d8;transform:scaleX(.876);">1</span>
<span class="t" style="left:47.8px;top:470.9px;font-size:10.5px;line-height:11px;color:#c8d0d8;transform:scaleX(.876);">5</span>
<span class="t" style="left:47.8px;top:480.9px;font-size:10.5px;line-height:11px;color:#c8d0d8;transform:scaleX(.876);">0</span>
<span class="t" style="left:47.8px;top:510.9px;font-size:10.5px;line-height:11px;color:#c8d0d8;transform:scaleX(.876);">2</span>
<span class="t" style="left:47.8px;top:520.9px;font-size:10.5px;line-height:11px;color:#c8d0d8;transform:scaleX(.876);">0</span>
<span class="t" style="left:47.8px;top:530.9px;font-size:10.5px;line-height:11px;color:#c8d0d8;transform:scaleX(.876);">0</span>
<span class="t" style="left:47.8px;top:560.9px;font-size:10.5px;line-height:11px;color:#c8d0d8;transform:scaleX(.876);">2</span>
<span class="t" style="left:47.8px;top:570.9px;font-size:10.5px;line-height:11px;color:#c8d0d8;transform:scaleX(.876);">5</span>
<span class="t" style="left:47.8px;top:580.9px;font-size:10.5px;line-height:11px;color:#c8d0d8;transform:scaleX(.876);">0</span>
<span class="t" style="left:47.8px;top:610.9px;font-size:10.5px;line-height:11px;color:#c8d0d8;transform:scaleX(.876);">3</span>
<span class="t" style="left:47.8px;top:620.9px;font-size:10.5px;line-height:11px;color:#c8d0d8;transform:scaleX(.876);">0</span>
<span class="t" style="left:47.8px;top:630.9px;font-size:10.5px;line-height:11px;color:#c8d0d8;transform:scaleX(.876);">0</span>
<span class="t" style="left:47.8px;top:660.9px;font-size:10.5px;line-height:11px;color:#c8d0d8;transform:scaleX(.876);">3</span>
<span class="t" style="left:47.8px;top:670.9px;font-size:10.5px;line-height:11px;color:#c8d0d8;transform:scaleX(.876);">5</span>
<span class="t" style="left:47.8px;top:680.9px;font-size:10.5px;line-height:11px;color:#c8d0d8;transform:scaleX(.876);">0</span>
<div style="left:306px;top:309px;width:192px;height:192px;background:#44b9ba;box-shadow:0 1px 3px rgba(0,0,0,.6);"></div>
<svg style="left:306px;top:309px;" width="192" height="192" viewBox="0 0 192 192"><path d="M21 2.6A103 103 0 0 1 96 72.5A103 103 0 0 1 175.5 2.6L191.3 55.5A86 86 0 0 0 122.6 138L124.2 189.4L63.2 189.4L63.6 136A82 82 0 0 0 1 55.5Z" fill="#ffffff"/></svg>
<div style="left:742px;top:86px;width:16px;height:620px;background:linear-gradient(90deg,#2b2b2b,#484848);"></div>
<div style="left:300px;top:706px;width:442px;height:17px;background:linear-gradient(#2e2e2e,#484848);"></div>
<div style="left:742px;top:706px;width:16px;height:17px;background:#555555;"></div>
<div style="left:45px;top:706px;width:48px;height:17px;background:#3c3c3c;"></div>
<div style="left:93px;top:706px;width:24px;height:17px;background:#4a4a4a;border-left:1px solid #333;border-right:1px solid #333;"></div>
<div style="left:117px;top:706px;width:170px;height:17px;background:#4f4f4f;"></div>
<div style="left:287px;top:706px;width:13px;height:17px;background:#555;border-left:1px solid #3a3a3a;"></div>
<span class="t" style="left:55px;top:706.2px;font-size:11px;line-height:17px;color:#f2f2f2;font-weight:normal;font-family:'DejaVu Sans','Liberation Sans','Noto Sans CJK JP',sans-serif;transform:scaleX(0.8902);">100%</span>
<svg style="left:99px;top:709px;" width="12" height="12" viewBox="0 0 12 12"><circle cx="6" cy="6" r="5.4" fill="#bdbdbd"/><path d="M6 2V6.5H10.5" stroke="#4a4a4a" stroke-width="1.3" fill="none"/><path d="M6.6 2.6H9.8V6H6.6Z" fill="#e8e8e8"/></svg>
<span class="t" style="left:142px;top:705.0px;font-size:13px;line-height:19px;color:#f2f2f2;font-weight:normal;transform:scaleX(0.6248);">ファイル</span>
<span class="t" style="left:179.8px;top:706.0px;font-size:11px;line-height:17px;color:#f2f2f2;font-weight:normal;font-family:'DejaVu Sans','Liberation Sans','Noto Sans CJK JP',sans-serif;transform:scaleX(0.5916);">:</span>
<span class="t" style="left:190px;top:706.2px;font-size:11px;line-height:17px;color:#f2f2f2;font-weight:normal;font-family:'DejaVu Sans','Liberation Sans','Noto Sans CJK JP',sans-serif;transform:scaleX(0.8690);">108.0K/144.0K</span>
<svg style="left:291px;top:710px;" width="7" height="9" viewBox="0 0 7 9"><path d="M0 0L7 4.5L0 9Z" fill="#f0f0f0"/></svg>
<div style="left:45px;top:723px;width:713px;height:1px;background:#2c2c2c;"></div>
<div style="left:45px;top:724px;width:713px;height:18px;background:#393939;"></div>
<div style="left:45px;top:724px;width:72px;height:18px;background:#535353;border-right:1px solid #2e2e2e;"></div>
<div style="left:117px;top:724px;width:66px;height:18px;background:#464646;border-right:1px solid #2e2e2e;"></div>
<span class="t" style="left:53px;top:725.0px;font-size:11px;line-height:17px;color:#e8e8e8;font-weight:normal;font-family:'DejaVu Sans','Liberation Sans','Noto Sans CJK JP',sans-serif;transform:scaleX(0.9122);">Mini Bridge</span>
<span class="t" style="left:125px;top:724.0px;font-size:13px;line-height:19px;color:#9a9a9a;font-weight:normal;transform:scaleX(0.6680);">タイムライン</span>
<svg style="left:740px;top:729px;" width="14" height="7" viewBox="0 0 14 7"><path d="M0 2H5L2.5 5Z" fill="#d8d8d8"/><path d="M6 -0.5H14M6 1.5H14M6 3.5H14M6 5.5H14" stroke="#262626" stroke-width="1" shape-rendering="crispEdges"/><path d="M6 0.5H14M6 2.5H14M6 4.5H14M6 6.5H14" stroke="#e0e0e0" stroke-width="1" shape-rendering="crispEdges"/></svg>
<div style="left:761px;top:67px;width:282px;height:12px;background:linear-gradient(#404040,#363636);"></div>
<svg style="left:786.5px;top:70px;" width="8" height="5" viewBox="0 0 8 5"><path d="M3.3 0L0 2.5L3.3 5ZM7.3 0L4 2.5L7.3 5Z" fill="#c8c8c8"/></svg>
<svg style="left:1034px;top:70px;" width="8" height="5" viewBox="0 0 8 5"><path d="M0 0L3.3 2.5L0 5ZM4 0L7.3 2.5L4 5Z" fill="#c8c8c8"/></svg>
<div style="left:761px;top:79px;width:37px;height:663px;background:#535353;"></div>
<div style="left:798px;top:79px;width:3px;height:663px;background:#2e2e2e;"></div>
<div style="left:761px;top:146.5px;width:37px;height:2px;background:#2e2e2e;"></div>
<div style="left:761px;top:215.5px;width:37px;height:2px;background:#2e2e2e;"></div>
<div style="left:761px;top:284.5px;width:37px;height:2px;background:#2e2e2e;"></div>
<div style="left:761px;top:354px;width:37px;height:2px;background:#2e2e2e;"></div>
<div style="left:761px;top:79px;width:37px;height:1px;background:#676767;"></div>
<div style="left:761px;top:148.5px;width:37px;height:1px;background:#676767;"></div>
<div style="left:761px;top:217.5px;width:37px;height:1px;background:#676767;"></div>
<div style="left:761px;top:286.5px;width:37px;height:1px;background:#676767;"></div>
<div style="left:761px;top:356px;width:37px;height:1px;background:#676767;"></div>
<div style="left:770px;top:83px;width:20px;height:4px;background:repeating-linear-gradient(90deg,#363636 0 1px,transparent 1px 2px);"></div>
<div style="left:770px;top:152px;width:20px;height:4px;background:repeating-linear-gradient(90deg,#363636 0 1px,transparent 1px 2px);"></div>
<div style="left:770px;top:221px;width:20px;height:4px;background:repeating-linear-gradient(90deg,#363636 0 1px,transparent 1px 2px);"></div>
<div style="left:770px;top:290.5px;width:20px;height:4px;background:repeating-linear-gradient(90deg,#363636 0 1px,transparent 1px 2px);"></div>
<svg style="left:773px;top:94px;" width="16" height="17" viewBox="0 0 16 17"><rect x="0.6" y="0.6" width="4" height="4" fill="none" stroke="#bdbdbd" stroke-width="1.1"/><rect x="0.6" y="6.6" width="4" height="4" fill="none" stroke="#bdbdbd" stroke-width="1.1"/><rect x="0" y="12" width="5.2" height="5" fill="#bdbdbd"/><path d="M8 3.5Q14 2.5 14 8.5Q14 12.5 10 14.5" fill="none" stroke="#bdbdbd" stroke-width="2"/><path d="M7 1.5L12 0.5L10.5 6Z" fill="#bdbdbd"/></svg>
<svg style="left:772px;top:123px;" width="17" height="15" viewBox="0 0 17 15"><path d="M0.5 0.5L16 7.5L0.5 14.5Z" fill="#bdbdbd"/></svg>
<svg style="left:772px;top:162px;" width="17" height="18" viewBox="0 0 17 18"><path d="M6 1L11 3.5V9.5L6 12L1 9.5V3.5Z" fill="none" stroke="#bdbdbd" stroke-width="1.2"/><path d="M1 3.5L6 6L11 3.5M6 6V12" fill="none" stroke="#bdbdbd" stroke-width="1"/><rect x="12.5" y="1.5" width="4" height="3.4" fill="#bdbdbd"/><rect x="12.5" y="6.5" width="4" height="3.4" fill="#bdbdbd"/><rect x="0.5" y="14" width="16" height="3.5" fill="#bdbdbd"/><path d="M12 15L15.5 15L13.8 17Z" fill="#333"/></svg>
<svg style="left:772px;top:190px;" width="17" height="18" viewBox="0 0 17 18"><circle cx="8.5" cy="9" r="8.3" fill="#bdbdbd"/><circle cx="8.5" cy="4.8" r="1.7" fill="#535353"/><rect x="7" y="7.6" width="3" height="6.6" fill="#535353"/></svg>
<svg style="left:772px;top:230px;" width="17" height="20" viewBox="0 0 17 20"><rect x="4.3" y="11.3" width="8.5" height="8.6" fill="#bdbdbd"/><path d="M6 11.5L3 6M8.4 11.5V5M10.8 11.5L13.2 7.5" stroke="#bdbdbd" stroke-width="1.5" fill="none"/><ellipse cx="2.3" cy="4.3" rx="1.7" ry="3.3" fill="#bdbdbd" transform="rotate(-22 2.3 4.3)"/><ellipse cx="8.4" cy="3.8" rx="1.6" ry="3.4" fill="#bdbdbd"/><ellipse cx="13.8" cy="5.8" rx="1.7" ry="2.9" fill="#bdbdbd" transform="rotate(28 13.8 5.8)"/></svg>
<svg style="left:771px;top:260px;" width="19" height="17" viewBox="0 0 19 17"><path d="M-0.5 0.5Q5 -0.8 8 2.6Q9.5 5 7.5 6.3Q4 7.6 2.4 4Q1.5 1.8 -0.5 0.5Z" fill="#bdbdbd"/><rect x="8" y="3.2" width="11" height="1.8" fill="#bdbdbd"/><rect x="0.5" y="10.6" width="12" height="1.8" fill="#bdbdbd"/><path d="M18 6.5Q19 11.5 17.5 16.5Q13 16 12.5 11.5Q13.5 7.5 18 6.5Z" fill="#bdbdbd"/></svg>
<span class="t" style="left:773px;top:298.5px;font-size:16px;line-height:22px;color:#bdbdbd;font-weight:bold;transform:scaleX(1.0378);">A</span>
<div style="left:786px;top:302px;width:1px;height:15px;background:#bdbdbd;"></div>
<svg style="left:774px;top:331px;" width="12" height="15" viewBox="0 0 12 15"><path d="M5.5 0H11.5V1.6H10.4V14.5H9V1.6H7.4V14.5H6V8.4Q0.5 8.4 0.5 4.2Q0.5 0 5.5 0Z" fill="#bdbdbd"/></svg>
<div style="left:801px;top:79px;width:242px;height:247px;background:#535353;"></div>
<div style="left:801px;top:79px;width:242px;height:17px;background:linear-gradient(#414141,#3b3b3b);"></div>
<div style="left:801px;top:79px;width:52px;height:18px;background:#535353;border-right:1px solid #2e2e2e;"></div>
<span class="t" style="left:809px;top:78.3px;font-size:13px;line-height:19px;color:#ececec;font-weight:normal;transform:scaleX(0.6973);">レイヤー</span>
<div style="left:853px;top:79px;width:59px;height:17px;background:#424242;border-right:1px solid #2e2e2e;border-bottom:1px solid #2e2e2e;"></div>
<span class="t" style="left:860px;top:78.3px;font-size:13px;line-height:19px;color:#a0a0a0;font-weight:normal;transform:scaleX(0.6809);">チャンネル</span>
<div style="left:912px;top:79px;width:35px;height:17px;background:#424242;border-right:1px solid #2e2e2e;border-bottom:1px solid #2e2e2e;"></div>
<span class="t" style="left:920px;top:78.3px;font-size:13px;line-height:19px;color:#a0a0a0;font-weight:normal;transform:scaleX(0.7303);">パス</span>
<svg style="left:1027px;top:84px;" width="14" height="7" viewBox="0 0 14 7"><path d="M0 2H5L2.5 5Z" fill="#d8d8d8"/><path d="M6 -0.5H14M6 1.5H14M6 3.5H14M6 5.5H14" stroke="#262626" stroke-width="1" shape-rendering="crispEdges"/><path d="M6 0.5H14M6 2.5H14M6 4.5H14M6 6.5H14" stroke="#e0e0e0" stroke-width="1" shape-rendering="crispEdges"/></svg>
<div style="left:806px;top:99px;width:64px;height:21px;border:1px solid #343434;border-radius:3px;background:linear-gradient(#686868,#555555);box-shadow:0 1px 0 #626262, inset 0 1px 0 #767676;"></div>
<svg style="left:859px;top:104px;" width="6" height="10" viewBox="0 0 6 10"><path d="M0 4L3 0.5L6 4ZM0 6L3 9.5L6 6Z" fill="#f0f0f0"/></svg>
<svg style="left:812px;top:104px;" width="10" height="10" viewBox="0 0 10 10"><circle cx="5.8" cy="4.2" r="3" fill="none" stroke="#e4e4e4" stroke-width="1.4"/><path d="M3.6 6.4L0.8 9.2" stroke="#e4e4e4" stroke-width="1.6"/></svg>
<span class="t" style="left:828px;top:100.0px;font-size:13px;line-height:19px;color:#f0f0f0;font-weight:normal;transform:scaleX(0.8456);">種類</span>
<svg style="left:895px;top:103px;" width="14" height="12" viewBox="0 0 14 12"><rect x="0.6" y="0.6" width="12.4" height="10.4" fill="none" stroke="#c4c4c4" stroke-width="1.2"/><path d="M2 9L5 5.5L7 7.5L9 6L11.5 9Z" fill="#c4c4c4"/><circle cx="9.5" cy="3.6" r="1.1" fill="#c4c4c4"/></svg>
<svg style="left:919px;top:103px;" width="12" height="12" viewBox="0 0 12 12"><circle cx="6" cy="6" r="5.2" fill="none" stroke="#c4c4c4" stroke-width="1.3"/><path d="M2.3 9.7A5.2 5.2 0 0 1 9.7 2.3Z" fill="#c4c4c4"/></svg>
<span class="t" style="left:943.5px;top:98.5px;font-size:15px;line-height:21px;color:#c4c4c4;font-weight:bold;font-family:'Liberation Serif',serif;transform:scaleX(1.0484);">T</span>
<svg style="left:967px;top:103px;" width="12" height="12" viewBox="0 0 12 12"><rect x="1.5" y="1.5" width="9" height="9" fill="none" stroke="#c4c4c4" stroke-width="1.1"/><rect x="0" y="0" width="3" height="3" fill="#535353" stroke="#c4c4c4" stroke-width="1"/><rect x="0" y="9" width="3" height="3" fill="#535353" stroke="#c4c4c4" stroke-width="1"/><rect x="9" y="0" width="3" height="3" fill="#535353" stroke="#c4c4c4" stroke-width="1"/><rect x="9" y="9" width="3" height="3" fill="#535353" stroke="#c4c4c4" stroke-width="1"/></svg>
<svg style="left:991px;top:103px;" width="12" height="13" viewBox="0 0 12 13"><path d="M4 0.6H8.5L11.4 3.5V11.4H4Z" fill="none" stroke="#c4c4c4" stroke-width="1.2"/><path d="M8 0.6V4H11.4" fill="none" stroke="#c4c4c4" stroke-width="1"/><rect x="0" y="6" width="6.5" height="7" fill="#9a9a9a"/></svg>
<div style="left:1031px;top:102px;width:9px;height:16px;background:#3a3a3a;border:1px solid #2e2e2e;border-radius:1px;"></div>
<div style="left:1032px;top:103px;width:7px;height:7px;background:linear-gradient(#a0a0a0,#7a7a7a);"></div>
<div style="left:801px;top:123px;width:242px;height:1px;background:#383838;"></div>
<div style="left:801px;top:124px;width:242px;height:1px;background:#5e5e5e;"></div>
<div style="left:806px;top:128px;width:110px;height:20px;border:1px solid #343434;border-radius:3px;background:linear-gradient(#686868,#555555);box-shadow:0 1px 0 #626262, inset 0 1px 0 #767676;"></div>
<svg style="left:905px;top:133px;" width="6" height="10" viewBox="0 0 6 10"><path d="M0 4L3 0.5L6 4ZM0 6L3 9.5L6 6Z" fill="#f0f0f0"/></svg>
<span class="t" style="left:813px;top:128.0px;font-size:13px;line-height:19px;color:#f0f0f0;font-weight:normal;transform:scaleX(0.8841);">通常</span>
<span class="t" style="left:925px;top:128.0px;font-size:13px;line-height:19px;color:#f0f0f0;font-weight:normal;transform:scaleX(0.9201);">不透明度 :</span>
<div style="left:985px;top:128px;width:56px;height:20px;background:#3a3a3a;border:1px solid #2f2f2f;border-radius:3px;box-shadow:0 1px 0 #626262;"></div>
<div style="left:1021px;top:129px;width:19px;height:18px;background:linear-gradient(#767676,#5e5e5e);border-radius:0 2px 2px 0;"></div>
<svg style="left:1028px;top:136.5px;" width="6" height="3" viewBox="0 0 6 3"><path d="M0 0H6L3 3.2Z" fill="#f0f0f0"/></svg>
<span class="t" style="left:989px;top:129.5px;font-size:11px;line-height:17px;color:#f0f0f0;font-weight:normal;font-family:'DejaVu Sans','Liberation Sans','Noto Sans CJK JP',sans-serif;transform:scaleX(0.8902);">100%</span>
<div style="left:801px;top:151px;width:242px;height:1px;background:#383838;"></div>
<div style="left:801px;top:152px;width:242px;height:1px;background:#5e5e5e;"></div>
<span class="t" style="left:808px;top:156.5px;font-size:13px;line-height:19px;color:#f0f0f0;font-weight:normal;transform:scaleX(0.6813);">ロック :</span>
<svg style="left:849px;top:160px;" width="11" height="11" viewBox="0 0 11 11"><rect x="0.00" y="0.00" width="3.67" height="3.67" fill="#c8c8c8"/><rect x="0.00" y="3.67" width="3.67" height="3.67" fill="#7e7e7e"/><rect x="0.00" y="7.34" width="3.67" height="3.67" fill="#c8c8c8"/><rect x="3.67" y="0.00" width="3.67" height="3.67" fill="#7e7e7e"/><rect x="3.67" y="3.67" width="3.67" height="3.67" fill="#c8c8c8"/><rect x="3.67" y="7.34" width="3.67" height="3.67" fill="#7e7e7e"/><rect x="7.34" y="0.00" width="3.67" height="3.67" fill="#c8c8c8"/><rect x="7.34" y="3.67" width="3.67" height="3.67" fill="#7e7e7e"/><rect x="7.34" y="7.34" width="3.67" height="3.67" fill="#c8c8c8"/></svg>
<svg style="left:869px;top:158px;" width="17" height="15" viewBox="0 0 17 15"><path d="M16 0.5L7.5 9.5" stroke="#c4c4c4" stroke-width="1.6"/><path d="M7.8 8.5Q9.5 10 8.5 11.5Q6 14.5 0.5 14Q3.5 12.5 4 10.5Q5.5 7.5 7.8 8.5Z" fill="#c4c4c4"/></svg>
<svg style="left:892px;top:159px;" width="13" height="13" viewBox="0 0 13 13"><path d="M6.5 1.5V11.5M1.5 6.5H11.5" stroke="#c4c4c4" stroke-width="1.2"/><path d="M6.5 0L4.2 2.8H8.8ZM6.5 13L4.2 10.2H8.8ZM0 6.5L2.8 4.2V8.8ZM13 6.5L10.2 4.2V8.8Z" fill="#c4c4c4"/></svg>
<svg style="left:916px;top:158px;" width="11" height="14" viewBox="0 0 11 14"><path d="M2.5 6.5V4Q2.5 1 5.5 1Q8.5 1 8.5 4V6.5" fill="none" stroke="#c4c4c4" stroke-width="1.6"/><rect x="0.5" y="6" width="10" height="7.5" rx="0.8" fill="#c4c4c4"/><rect x="4.8" y="8.5" width="1.4" height="2.6" fill="#535353"/></svg>
<span class="t" style="left:951.5px;top:156.5px;font-size:13px;line-height:19px;color:#f0f0f0;font-weight:normal;transform:scaleX(0.8425);">塗り :</span>
<div style="left:985px;top:156px;width:56px;height:20px;background:#3a3a3a;border:1px solid #2f2f2f;border-radius:3px;box-shadow:0 1px 0 #626262;"></div>
<div style="left:1021px;top:157px;width:19px;height:18px;background:linear-gradient(#767676,#5e5e5e);border-radius:0 2px 2px 0;"></div>
<svg style="left:1028px;top:164.5px;" width="6" height="3" viewBox="0 0 6 3"><path d="M0 0H6L3 3.2Z" fill="#f0f0f0"/></svg>
<span class="t" style="left:989px;top:157.5px;font-size:11px;line-height:17px;color:#f0f0f0;font-weight:normal;font-family:'DejaVu Sans','Liberation Sans','Noto Sans CJK JP',sans-serif;transform:scaleX(0.8902);">100%</span>
<div style="left:801px;top:180px;width:242px;height:1px;background:#383838;"></div>
<div style="left:801px;top:181px;width:229px;height:125px;background:#454545;"></div>
<div style="left:1030px;top:181px;width:13px;height:125px;background:#4d4d4d;border-left:1px solid #404040;"></div>
<div style="left:801px;top:182px;width:31px;height:39px;background:#535353;"></div>
<div style="left:832px;top:182px;width:198px;height:39px;background:#596578;"></div>
<div style="left:801px;top:221px;width:229px;height:1px;background:#3c3c3c;"></div>
<div style="left:831px;top:182px;width:1px;height:39px;background:#3c3c3c;"></div>
<svg style="left:809px;top:196px;" width="15" height="10" viewBox="0 0 15 10"><path d="M0.5 5Q7.5 -3.5 14.5 5Q7.5 12.5 0.5 5Z" fill="#c0c0c0"/><circle cx="7.5" cy="4.8" r="3.1" fill="#4a4a4a"/><circle cx="7.5" cy="4.8" r="1.4" fill="#c0c0c0"/></svg>
<div style="left:835px;top:185px;width:32px;height:32px;background:#44b9ba;outline:1px solid #000;"></div>
<svg style="left:835px;top:185px;" width="32" height="32" viewBox="0 0 192 192"><path d="M21 2.6A103 103 0 0 1 96 72.5A103 103 0 0 1 175.5 2.6L191.3 55.5A86 86 0 0 0 122.6 138L124.2 189.4L63.2 189.4L63.6 136A82 82 0 0 0 1 55.5Z" fill="#fff"/></svg>
<svg style="left:833px;top:183px;" width="36" height="36" viewBox="0 0 36 36"><path d="M0.5 12V0.5H12M24 0.5H35.5V12M35.5 24V35.5H24M12 35.5H0.5V24" fill="none" stroke="#fff" stroke-width="1"/></svg>
<span class="t" style="left:878px;top:192.5px;font-size:13px;line-height:19px;color:#ffffff;font-weight:normal;transform:scaleX(0.7526);">レイヤー 0</span>
<div style="left:801px;top:306px;width:242px;height:1px;background:#383838;"></div>
<div style="left:801px;top:307px;width:242px;height:19px;background:#535353;border-top:1px solid #676767;"></div>
<svg style="left:842px;top:312px;" width="14" height="8" viewBox="0 0 14 8"><path d="M5.6 0.8H4A3.2 3.2 0 0 0 4 7.2H5.6M8.4 0.8H10A3.2 3.2 0 0 1 10 7.2H8.4M4.4 4H9.6" fill="none" stroke="#8c8c8c" stroke-width="1.5"/></svg>
<span class="t" style="left:869.5px;top:305.0px;font-size:15px;line-height:21px;color:#c4c4c4;font-weight:normal;font-family:'Liberation Sans',sans-serif;transform:scaleX(1.1566);font-style:italic;">fx</span>
<svg style="left:885px;top:320px;" width="4" height="3" viewBox="0 0 4 3"><path d="M0 0H4L2 3Z" fill="#c4c4c4"/></svg>
<svg style="left:897px;top:310px;" width="13" height="12" viewBox="0 0 13 12"><rect x="0" y="0" width="13" height="12" fill="#b0b0b0"/><circle cx="6.5" cy="6" r="3.2" fill="#535353"/></svg>
<svg style="left:924px;top:310px;" width="13" height="13" viewBox="0 0 13 13"><circle cx="6" cy="6" r="5.2" fill="none" stroke="#b0b0b0" stroke-width="1.4"/><path d="M2.3 9.7A5.2 5.2 0 0 1 9.7 2.3Z" fill="#b0b0b0"/></svg>
<svg style="left:937px;top:320px;" width="4" height="3" viewBox="0 0 4 3"><path d="M0 0H4L2 3Z" fill="#c4c4c4"/></svg>
<svg style="left:950px;top:310px;" width="14" height="12" viewBox="0 0 14 12"><path d="M0 0.5H5.5L7 2.5H13.5V11.5H0Z" fill="#b0b0b0"/></svg>
<svg style="left:978px;top:310px;" width="12" height="12" viewBox="0 0 12 12"><defs><linearGradient id="gn" x2="0" y2="1"><stop offset="0" stop-color="#d4d4d4"/><stop offset="1" stop-color="#8e8e8e"/></linearGradient></defs><path d="M0.5 0H11V11.5H4.5V7H0.5Z" fill="url(#gn)"/><path d="M0 7.6H4V11.5Z" fill="#b4b4b4"/></svg>
<svg style="left:1004px;top:309px;" width="12" height="13" viewBox="0 0 12 13"><path d="M1 3H11M4 2.5V1H8V2.5" fill="none" stroke="#7e7e7e" stroke-width="1.3"/><path d="M2 4.5H10L9.3 12H2.7Z" fill="none" stroke="#7e7e7e" stroke-width="1.2"/><path d="M4.4 5.5V11M6 5.5V11M7.6 5.5V11" stroke="#7e7e7e" stroke-width="1"/></svg>
<svg style="left:1034px;top:314px;" width="9" height="9" viewBox="0 0 9 9"><path d="M8 0.5h1M6 2.5h1M8 2.5h1M4 4.5h1M6 4.5h1M8 4.5h1M2 6.5h1M4 6.5h1M6 6.5h1M8 6.5h1M0 8.5h1M2 8.5h1M4 8.5h1M6 8.5h1M8 8.5h1" stroke="#7c7c7c" stroke-width="1" shape-rendering="crispEdges"/></svg>
<div style="left:801px;top:326px;width:242px;height:2px;background:#2e2e2e;"></div>
<div style="left:801px;top:328px;width:242px;height:165px;background:#535353;"></div>
<div style="left:801px;top:328px;width:242px;height:17px;background:linear-gradient(#414141,#3b3b3b);"></div>
<div style="left:801px;top:328px;width:41px;height:17px;background:#424242;border-right:1px solid #2e2e2e;border-bottom:1px solid #2e2e2e;"></div>
<span class="t" style="left:808px;top:327.3px;font-size:13px;line-height:19px;color:#a0a0a0;font-weight:normal;transform:scaleX(0.6920);">カラー</span>
<div style="left:842px;top:328px;width:58px;height:18px;background:#535353;border-right:1px solid #2e2e2e;"></div>
<span class="t" style="left:849px;top:327.3px;font-size:13px;line-height:19px;color:#ececec;font-weight:normal;transform:scaleX(0.6614);">スウォッチ</span>
<svg style="left:1027px;top:333px;" width="14" height="7" viewBox="0 0 14 7"><path d="M0 2H5L2.5 5Z" fill="#d8d8d8"/><path d="M6 -0.5H14M6 1.5H14M6 3.5H14M6 5.5H14" stroke="#262626" stroke-width="1" shape-rendering="crispEdges"/><path d="M6 0.5H14M6 2.5H14M6 4.5H14M6 6.5H14" stroke="#e0e0e0" stroke-width="1" shape-rendering="crispEdges"/></svg>
<div style="left:801px;top:346px;width:228px;height:129px;background:#454545;"></div>
<div style="left:1029px;top:346px;width:14px;height:129px;background:#4d4d4d;border-left:1px solid #404040;"></div>
<svg style="left:801px;top:347px;shape-rendering:crispEdges;" width="228" height="108" viewBox="0 0 228 108"><rect x="0" y="0" width="11" height="11" fill="#ff0000"/><rect x="12" y="0" width="11" height="11" fill="#ffff00"/><rect x="24" y="0" width="11" height="11" fill="#00ff00"/><rect x="36" y="0" width="11" height="11" fill="#00ffff"/><rect x="48" y="0" width="11" height="11" fill="#0000ff"/><rect x="60" y="0" width="11" height="11" fill="#ff00ff"/><rect x="72" y="0" width="11" height="11" fill="#ffffff"/><rect x="84" y="0" width="11" height="11" fill="#ebebeb"/><rect x="96" y="0" width="11" height="11" fill="#e1e1e1"/><rect x="108" y="0" width="11" height="11" fill="#d7d7d7"/><rect x="120" y="0" width="11" height="11" fill="#cccccc"/><rect x="132" y="0" width="11" height="11" fill="#c2c2c2"/><rect x="144" y="0" width="11" height="11" fill="#b7b7b7"/><rect x="156" y="0" width="11" height="11" fill="#acacac"/><rect x="168" y="0" width="11" height="11" fill="#a0a0a0"/><rect x="180" y="0" width="11" height="11" fill="#959595"/><rect x="192" y="0" width="11" height="11" fill="#e60012"/><rect x="204" y="0" width="11" height="11" fill="#fff100"/><rect x="216" y="0" width="11" height="11" fill="#009944"/><rect x="0" y="12" width="11" height="11" fill="#00a0e9"/><rect x="12" y="12" width="11" height="11" fill="#1d2088"/><rect x="24" y="12" width="11" height="11" fill="#e4007f"/><rect x="36" y="12" width="11" height="11" fill="#898989"/><rect x="48" y="12" width="11" height="11" fill="#7d7d7d"/><rect x="60" y="12" width="11" height="11" fill="#707070"/><rect x="72" y="12" width="11" height="11" fill="#626262"/><rect x="84" y="12" width="11" height="11" fill="#555555"/><rect x="96" y="12" width="11" height="11" fill="#464646"/><rect x="108" y="12" width="11" height="11" fill="#363636"/><rect x="120" y="12" width="11" height="11" fill="#262626"/><rect x="132" y="12" width="11" height="11" fill="#111111"/><rect x="144" y="12" width="11" height="11" fill="#000000"/><rect x="156" y="12" width="11" height="11" fill="#f29b76"/><rect x="168" y="12" width="11" height="11" fill="#f6b37f"/><rect x="180" y="12" width="11" height="11" fill="#facd89"/><rect x="192" y="12" width="11" height="11" fill="#fff799"/><rect x="204" y="12" width="11" height="11" fill="#cce198"/><rect x="216" y="12" width="11" height="11" fill="#acd598"/><rect x="0" y="24" width="11" height="11" fill="#89c997"/><rect x="12" y="24" width="11" height="11" fill="#84ccc9"/><rect x="24" y="24" width="11" height="11" fill="#7ecef4"/><rect x="36" y="24" width="11" height="11" fill="#88abda"/><rect x="48" y="24" width="11" height="11" fill="#8c97cb"/><rect x="60" y="24" width="11" height="11" fill="#8f82bc"/><rect x="72" y="24" width="11" height="11" fill="#aa89bd"/><rect x="84" y="24" width="11" height="11" fill="#c490bf"/><rect x="96" y="24" width="11" height="11" fill="#f19ec2"/><rect x="108" y="24" width="11" height="11" fill="#f29c9f"/><rect x="120" y="24" width="11" height="11" fill="#ec6941"/><rect x="132" y="24" width="11" height="11" fill="#f19149"/><rect x="144" y="24" width="11" height="11" fill="#f8b551"/><rect x="156" y="24" width="11" height="11" fill="#fff45c"/><rect x="168" y="24" width="11" height="11" fill="#b3d465"/><rect x="180" y="24" width="11" height="11" fill="#80c269"/><rect x="192" y="24" width="11" height="11" fill="#32b16c"/><rect x="204" y="24" width="11" height="11" fill="#13b5b1"/><rect x="216" y="24" width="11" height="11" fill="#00b7ee"/><rect x="0" y="36" width="11" height="11" fill="#448aca"/><rect x="12" y="36" width="11" height="11" fill="#556fb5"/><rect x="24" y="36" width="11" height="11" fill="#5f52a0"/><rect x="36" y="36" width="11" height="11" fill="#8957a1"/><rect x="48" y="36" width="11" height="11" fill="#ae5da1"/><rect x="60" y="36" width="11" height="11" fill="#ea68a2"/><rect x="72" y="36" width="11" height="11" fill="#eb6877"/><rect x="84" y="36" width="11" height="11" fill="#e60012"/><rect x="96" y="36" width="11" height="11" fill="#eb6100"/><rect x="108" y="36" width="11" height="11" fill="#f39800"/><rect x="120" y="36" width="11" height="11" fill="#fff100"/><rect x="132" y="36" width="11" height="11" fill="#8fc31f"/><rect x="144" y="36" width="11" height="11" fill="#22ac38"/><rect x="156" y="36" width="11" height="11" fill="#009944"/><rect x="168" y="36" width="11" height="11" fill="#009e96"/><rect x="180" y="36" width="11" height="11" fill="#00a0e9"/><rect x="192" y="36" width="11" height="11" fill="#0068b7"/><rect x="204" y="36" width="11" height="11" fill="#00479d"/><rect x="216" y="36" width="11" height="11" fill="#1d2088"/><rect x="0" y="48" width="11" height="11" fill="#601986"/><rect x="12" y="48" width="11" height="11" fill="#920783"/><rect x="24" y="48" width="11" height="11" fill="#e4007f"/><rect x="36" y="48" width="11" height="11" fill="#e5004f"/><rect x="48" y="48" width="11" height="11" fill="#a40000"/><rect x="60" y="48" width="11" height="11" fill="#a84200"/><rect x="72" y="48" width="11" height="11" fill="#ac6a00"/><rect x="84" y="48" width="11" height="11" fill="#b7aa00"/><rect x="96" y="48" width="11" height="11" fill="#638c0b"/><rect x="108" y="48" width="11" height="11" fill="#097c25"/><rect x="120" y="48" width="11" height="11" fill="#007130"/><rect x="132" y="48" width="11" height="11" fill="#00736d"/><rect x="144" y="48" width="11" height="11" fill="#0075a9"/><rect x="156" y="48" width="11" height="11" fill="#004986"/><rect x="168" y="48" width="11" height="11" fill="#002e73"/><rect x="180" y="48" width="11" height="11" fill="#100964"/><rect x="192" y="48" width="11" height="11" fill="#440062"/><rect x="204" y="48" width="11" height="11" fill="#6a005f"/><rect x="216" y="48" width="11" height="11" fill="#a4005b"/><rect x="0" y="60" width="11" height="11" fill="#a40035"/><rect x="12" y="60" width="11" height="11" fill="#7d0000"/><rect x="24" y="60" width="11" height="11" fill="#7f2d00"/><rect x="36" y="60" width="11" height="11" fill="#834e00"/><rect x="48" y="60" width="11" height="11" fill="#8a8000"/><rect x="60" y="60" width="11" height="11" fill="#486a00"/><rect x="72" y="60" width="11" height="11" fill="#005e15"/><rect x="84" y="60" width="11" height="11" fill="#005620"/><rect x="96" y="60" width="11" height="11" fill="#005752"/><rect x="108" y="60" width="11" height="11" fill="#005982"/><rect x="120" y="60" width="11" height="11" fill="#003567"/><rect x="132" y="60" width="11" height="11" fill="#001c58"/><rect x="144" y="60" width="11" height="11" fill="#03004c"/><rect x="156" y="60" width="11" height="11" fill="#31004a"/><rect x="168" y="60" width="11" height="11" fill="#500047"/><rect x="180" y="60" width="11" height="11" fill="#7e0043"/><rect x="192" y="60" width="11" height="11" fill="#7d0022"/><rect x="204" y="60" width="11" height="11" fill="#d4c3a6"/><rect x="216" y="60" width="11" height="11" fill="#a8977f"/><rect x="0" y="72" width="11" height="11" fill="#7c6a5a"/><rect x="12" y="72" width="11" height="11" fill="#59493f"/><rect x="24" y="72" width="11" height="11" fill="#362e2b"/><rect x="36" y="72" width="11" height="11" fill="#cfa972"/><rect x="48" y="72" width="11" height="11" fill="#b28850"/><rect x="60" y="72" width="11" height="11" fill="#996c33"/><rect x="72" y="72" width="11" height="11" fill="#81511c"/><rect x="84" y="72" width="11" height="11" fill="#6a3906"/><rect x="96" y="72" width="11" height="11" fill="#6cb4dc"/><rect x="108" y="72" width="11" height="11" fill="#6495d8"/><rect x="120" y="72" width="11" height="11" fill="#44baba"/><rect x="132" y="72" width="11" height="11" fill="#d4507c"/><rect x="144" y="72" width="11" height="11" fill="#e27c80"/><rect x="156" y="72" width="11" height="11" fill="#a8365c"/><rect x="168" y="72" width="11" height="11" fill="#eea8b0"/><rect x="180" y="72" width="11" height="11" fill="#f81c1c"/><rect x="192" y="72" width="11" height="11" fill="#fc6438"/><rect x="204" y="72" width="11" height="11" fill="#a84868"/><rect x="216" y="72" width="11" height="11" fill="#22ac38"/><rect x="0" y="84" width="11" height="11" fill="#f0f0f0"/><rect x="12" y="84" width="11" height="11" fill="#3ca0b4"/><rect x="24" y="84" width="11" height="11" fill="#e0e0e0"/><rect x="36" y="84" width="11" height="11" fill="#3c94bc"/><rect x="48" y="84" width="11" height="11" fill="#585858"/><rect x="60" y="84" width="11" height="11" fill="#a0a0a0"/><rect x="72" y="84" width="11" height="11" fill="#242424"/><rect x="84" y="84" width="11" height="11" fill="#2828f8"/><rect x="96" y="84" width="11" height="11" fill="#343434"/><rect x="108" y="84" width="11" height="11" fill="#2c90b8"/><rect x="120" y="84" width="11" height="11" fill="#f0f0f0"/><rect x="132" y="84" width="11" height="11" fill="#d8d8d8"/><rect x="144" y="84" width="11" height="11" fill="#e8e8e8"/><rect x="156" y="84" width="11" height="11" fill="#505050"/><rect x="168" y="84" width="11" height="11" fill="#48788c"/><rect x="180" y="84" width="11" height="11" fill="#e8f8fc"/><rect x="192" y="84" width="11" height="11" fill="#4ca4cc"/><rect x="204" y="84" width="11" height="11" fill="#2878a4"/><rect x="216" y="84" width="11" height="11" fill="#e8f8fc"/><rect x="0" y="96" width="11" height="11" fill="#b8e0e4"/><rect x="12" y="96" width="11" height="11" fill="#549c9c"/><rect x="24" y="96" width="11" height="11" fill="#fcfcfc"/><rect x="36" y="96" width="11" height="11" fill="#f0f0f0"/><rect x="48" y="96" width="11" height="11" fill="#585858"/><rect x="60" y="96" width="11" height="11" fill="#fcc400"/><rect x="72" y="96" width="11" height="11" fill="#549c9c"/><rect x="84" y="96" width="11" height="11" fill="#44b8b8"/><rect x="96" y="96" width="11" height="11" fill="#88d8ec"/><rect x="108" y="96" width="11" height="11" fill="#202020"/><rect x="120" y="96" width="11" height="11" fill="#043868"/><rect x="132" y="96" width="11" height="11" fill="#44b8b8"/><rect x="144" y="96" width="11" height="11" fill="#d8f4f0"/><rect x="156" y="96" width="11" height="11" fill="#fce0e4"/><rect x="168" y="96" width="11" height="11" fill="#f82818"/><rect x="180" y="96" width="11" height="11" fill="#880c10"/></svg>
<div style="left:801px;top:475px;width:242px;height:18px;background:#535353;border-top:1px solid #676767;"></div>
<svg style="left:977px;top:479px;" width="12" height="12" viewBox="0 0 12 12"><defs><linearGradient id="gn2" x2="0" y2="1"><stop offset="0" stop-color="#d4d4d4"/><stop offset="1" stop-color="#8e8e8e"/></linearGradient></defs><path d="M0.5 0H11V11.5H4.5V7H0.5Z" fill="url(#gn2)"/><path d="M0 7.6H4V11.5Z" fill="#b4b4b4"/></svg>
<svg style="left:1004px;top:477px;" width="12" height="13" viewBox="0 0 12 13"><path d="M1 3H11M4 2.5V1H8V2.5" fill="none" stroke="#7e7e7e" stroke-width="1.3"/><path d="M2 4.5H10L9.3 12H2.7Z" fill="none" stroke="#7e7e7e" stroke-width="1.2"/><path d="M4.4 5.5V11M6 5.5V11M7.6 5.5V11" stroke="#7e7e7e" stroke-width="1"/></svg>
<svg style="left:1034px;top:482px;" width="9" height="9" viewBox="0 0 9 9"><path d="M8 0.5h1M6 2.5h1M8 2.5h1M4 4.5h1M6 4.5h1M8 4.5h1M2 6.5h1M4 6.5h1M6 6.5h1M8 6.5h1M0 8.5h1M2 8.5h1M4 8.5h1M6 8.5h1M8 8.5h1" stroke="#7c7c7c" stroke-width="1" shape-rendering="crispEdges"/></svg>
<div style="left:801px;top:493px;width:242px;height:3px;background:#2e2e2e;"></div>
<div style="left:801px;top:496px;width:242px;height:246px;background:#454545;"></div>
<div style="left:801px;top:496px;width:242px;height:17px;background:linear-gradient(#414141,#3b3b3b);"></div>
<div style="left:801px;top:496px;width:50px;height:18px;background:#535353;border-right:1px solid #2e2e2e;"></div>
<span class="t" style="left:809px;top:495.3px;font-size:13px;line-height:19px;color:#ececec;font-weight:normal;transform:scaleX(0.6536);">スタイル</span>
<svg style="left:1027px;top:501px;" width="14" height="7" viewBox="0 0 14 7"><path d="M0 2H5L2.5 5Z" fill="#d8d8d8"/><path d="M6 -0.5H14M6 1.5H14M6 3.5H14M6 5.5H14" stroke="#262626" stroke-width="1" shape-rendering="crispEdges"/><path d="M6 0.5H14M6 2.5H14M6 4.5H14M6 6.5H14" stroke="#e0e0e0" stroke-width="1" shape-rendering="crispEdges"/></svg>
<div style="left:1029px;top:514px;width:14px;height:211px;background:#4d4d4d;border-left:1px solid #404040;"></div>
<div style="left:801px;top:515px;width:31px;height:31px;background:#383838;"></div>
<div style="left:833px;top:515px;width:31px;height:31px;background:#535353;"></div>
<div style="left:865px;top:515px;width:31px;height:31px;background:#535353;"></div>
<div style="left:897px;top:515px;width:31px;height:31px;background:#535353;"></div>
<div style="left:929px;top:515px;width:31px;height:31px;background:#535353;"></div>
<div style="left:961px;top:515px;width:31px;height:31px;background:#535353;"></div>
<div style="left:993px;top:515px;width:31px;height:31px;background:#535353;"></div>
<div style="left:801px;top:547px;width:31px;height:31px;background:#535353;"></div>
<div style="left:833px;top:547px;width:31px;height:31px;background:#535353;"></div>
<div style="left:865px;top:547px;width:31px;height:31px;background:#535353;"></div>
<div style="left:897px;top:547px;width:31px;height:31px;background:#535353;"></div>
<div style="left:929px;top:547px;width:31px;height:31px;background:#535353;"></div>
<div style="left:961px;top:547px;width:31px;height:31px;background:#535353;"></div>
<div style="left:993px;top:547px;width:31px;height:31px;background:#535353;"></div>
<div style="left:801px;top:579px;width:31px;height:31px;background:#535353;"></div>
<div style="left:833px;top:579px;width:31px;height:31px;background:#535353;"></div>
<div style="left:865px;top:579px;width:31px;height:31px;background:#535353;"></div>
<div style="left:897px;top:579px;width:31px;height:31px;background:#535353;"></div>
<div style="left:929px;top:579px;width:31px;height:31px;background:#535353;"></div>
<div style="left:961px;top:579px;width:31px;height:31px;background:#535353;"></div>
<svg style="left:809px;top:523px;" width="15" height="15" viewBox="0 0 16 16"><rect x="-0.5" y="-0.5" width="16" height="16" fill="#fff" stroke="#222" stroke-width="1"/><path d="M-3 -3L19 19" stroke="#e0001a" stroke-width="1.6"/></svg>
<svg style="left:841px;top:523px;" width="15" height="15" viewBox="0 0 16 16"><defs><radialGradient id="s1"><stop offset="0" stop-color="#ffe000"/><stop offset=".5" stop-color="#ff6a00"/><stop offset="1" stop-color="#e60000"/></radialGradient></defs><rect x="1.5" y="1.5" width="16" height="16" fill="#000" opacity=".6"/><rect width="16" height="16" fill="#111"/><rect x="1" y="1" width="14" height="14" fill="url(#s1)"/></svg>
<svg style="left:873px;top:523px;" width="15" height="15" viewBox="0 0 16 16"><rect x="-3" y="-3" width="22" height="22" rx="4" fill="none" stroke="#d8d4a0" stroke-width="1.6"/><rect x="-1" y="-1" width="18" height="18" rx="2" fill="none" stroke="#f4f0c4" stroke-width="1"/></svg>
<svg style="left:905px;top:523px;" width="15" height="15" viewBox="0 0 16 16"><defs><radialGradient id="s3"><stop offset="0" stop-color="#0c0c0c"/><stop offset=".28" stop-color="#6a6a6a"/><stop offset=".42" stop-color="#141414"/><stop offset=".68" stop-color="#5c5c5c"/><stop offset="1" stop-color="#161616"/></radialGradient></defs><rect x="1.5" y="1.5" width="16" height="16" rx="2" fill="#222" opacity=".7"/><rect width="16" height="16" rx="2" fill="url(#s3)"/></svg>
<svg style="left:937px;top:523px;overflow:hidden;" width="15" height="15" viewBox="0 0 16 16"><defs><linearGradient id="s4" x2="0" y2="1"><stop offset="0" stop-color="#3a8ae0"/><stop offset="1" stop-color="#0a50b0"/></linearGradient></defs><rect width="16" height="16" fill="url(#s4)"/><ellipse cx="6.5" cy="2.5" rx="6" ry="3" fill="#ffffff" opacity=".75"/><ellipse cx="12" cy="1.5" rx="3" ry="1.6" fill="#ffffff" opacity=".4"/></svg>
<svg style="left:969px;top:523px;" width="15" height="15" viewBox="0 0 16 16"><rect width="16" height="16" fill="#a8a8a8"/></svg>
<svg style="left:1001px;top:523px;" width="15" height="15" viewBox="0 0 16 16"><defs><radialGradient id="s6" cx=".3" cy=".35" r=".85"><stop offset="0" stop-color="#363636"/><stop offset=".55" stop-color="#6e6e6e"/><stop offset="1" stop-color="#b4b4b4"/></radialGradient></defs><rect width="16" height="16" fill="url(#s6)"/></svg>
<svg style="left:809px;top:555px;" width="15" height="15" viewBox="0 0 16 16"><rect width="16" height="16" fill="#6e5c3c"/></svg>
<svg style="left:841px;top:555px;" width="15" height="15" viewBox="0 0 16 16"><defs><linearGradient id="s8" x2="0" y2="1"><stop offset="0" stop-color="#5a4824"/><stop offset="1" stop-color="#a08c60"/></linearGradient></defs><rect width="16" height="16" fill="url(#s8)"/></svg>
<svg style="left:873px;top:555px;" width="15" height="15" viewBox="0 0 16 16"><rect width="16" height="16" fill="#d81830"/><path d="M0 3H16M0 8.5H16M0 13.5H16" stroke="#5838a8" stroke-width="1.1"/><path d="M0 1H16M0 6H16M0 11H16" stroke="#f06848" stroke-width="1"/><path d="M0 4.5H16M0 10H16" stroke="#70a040" stroke-width=".8"/><path d="M0 15.5H16" stroke="#801020" stroke-width="1"/></svg>
<svg style="left:905px;top:555px;" width="15" height="15" viewBox="0 0 16 16"><rect width="16" height="16" fill="#101418"/><path d="M0 0H7Q6 5 0 8Z" fill="#20b0b0"/><path d="M7 0H12Q13 3 10 5Q7 4 7 0Z" fill="#2840c0"/><path d="M12 0H16V6Q13 5 12 0Z" fill="#c02838"/><path d="M2 11Q6 5 11 8Q15 10 16 8V13Q12 16 8 13Q5 11 3 16H0Z" fill="#e8d020"/><path d="M0 8Q3 8 4 10L0 13Z" fill="#f0f0e0"/></svg>
<svg style="left:937px;top:555px;" width="15" height="15" viewBox="0 0 16 16"><rect width="16" height="16" fill="#f0d000"/><rect x="3.5" y="3.5" width="9" height="9" fill="#b09000"/><path d="M0 0L3.5 3.5V12.5L0 16Z" fill="#fff060"/><path d="M16 0L12.5 3.5V12.5L16 16Z" fill="#c8a800"/></svg>
<svg style="left:969px;top:555px;" width="15" height="15" viewBox="0 0 16 16"><defs><linearGradient id="s12" x1="0" y1="0" x2=".6" y2="1"><stop offset="0" stop-color="#b07050"/><stop offset=".55" stop-color="#d89060"/><stop offset="1" stop-color="#b8a040"/></linearGradient></defs><rect width="16" height="16" fill="url(#s12)"/></svg>
<svg style="left:1001px;top:555px;" width="15" height="15" viewBox="0 0 16 16"><defs><linearGradient id="s13" x2="0" y2="1"><stop offset="0" stop-color="#b8dcf8"/><stop offset="1" stop-color="#78a8e8"/></linearGradient></defs><rect width="16" height="16" fill="#d8ecfc"/><rect x="1" y="1" width="14" height="14" fill="url(#s13)"/><rect y="14.5" width="16" height="1.5" fill="#8890d0"/></svg>
<svg style="left:809px;top:587px;" width="15" height="15" viewBox="0 0 16 16"><defs><linearGradient id="s14" x2="0" y2="1"><stop offset="0" stop-color="#2a70c8"/><stop offset=".5" stop-color="#d8ecf8"/><stop offset=".62" stop-color="#c07818"/><stop offset=".8" stop-color="#402000"/><stop offset="1" stop-color="#c09040"/></linearGradient></defs><rect width="16" height="16" fill="url(#s14)"/></svg>
<svg style="left:841px;top:587px;" width="15" height="15" viewBox="0 0 16 16"><rect width="16" height="16" fill="#e8e8e8"/><path d="M1 2H3V4H1ZM5 1H6V3H5ZM8 2H10V3H8ZM12 1H14V3H12ZM2 6H4V7H2ZM6 5H8V7H6ZM10 5H11V7H10ZM13 6H15V8H13ZM1 9H2V11H1ZM4 9H6V10H4ZM8 9H9V11H8ZM11 9H13V11H11ZM2 13H4V15H2ZM6 12H7V14H6ZM9 13H11V14H9ZM13 12H14V15H13Z" fill="#555"/></svg>
<svg style="left:873px;top:587px;" width="15" height="15" viewBox="0 0 16 16"><defs><linearGradient id="s16" x2="0" y2="1"><stop offset="0" stop-color="#a070c0"/><stop offset=".5" stop-color="#6060b8"/><stop offset="1" stop-color="#9080d0"/></linearGradient></defs><rect x="2" y="2" width="16" height="16" fill="#1a1a1a" opacity=".75"/><rect width="16" height="16" fill="url(#s16)"/></svg>
<svg style="left:905px;top:587px;" width="15" height="15" viewBox="0 0 16 16"><rect width="16" height="16" fill="#4c4c4c"/><path d="M15.5 0V15.5H0" fill="none" stroke="#3c3c3c" stroke-width="1"/></svg>
<svg style="left:937px;top:587px;" width="15" height="15" viewBox="0 0 16 16"><rect x="0" y="0" width="16" height="16" rx="2" fill="none" stroke="#303030" stroke-width="1.2"/></svg>
<svg style="left:969px;top:587px;" width="15" height="15" viewBox="0 0 16 16"><rect x="0" y="0" width="16" height="16" rx="2" fill="#555555" stroke="#303030" stroke-width="1.2"/></svg>
<div style="left:801px;top:724px;width:242px;height:1px;background:#6a6a6a;"></div>
<div style="left:801px;top:725px;width:242px;height:17px;background:#535353;"></div>
<svg style="left:945px;top:728px;" width="12" height="12" viewBox="0 0 12 12"><circle cx="6" cy="6" r="4.8" fill="none" stroke="#8a8a8a" stroke-width="1.5"/><path d="M2.6 2.6L9.4 9.4" stroke="#8a8a8a" stroke-width="1.5"/></svg>
<svg style="left:976px;top:728px;" width="12" height="12" viewBox="0 0 12 12"><defs><linearGradient id="gn3" x2="0" y2="1"><stop offset="0" stop-color="#d4d4d4"/><stop offset="1" stop-color="#8e8e8e"/></linearGradient></defs><path d="M0.5 0H11V11.5H4.5V7H0.5Z" fill="url(#gn3)"/><path d="M0 7.6H4V11.5Z" fill="#b4b4b4"/></svg>
<svg style="left:1004px;top:727px;" width="12" height="13" viewBox="0 0 12 13"><path d="M1 3H11M4 2.5V1H8V2.5" fill="none" stroke="#7e7e7e" stroke-width="1.3"/><path d="M2 4.5H10L9.3 12H2.7Z" fill="none" stroke="#7e7e7e" stroke-width="1.2"/><path d="M4.4 5.5V11M6 5.5V11M7.6 5.5V11" stroke="#7e7e7e" stroke-width="1"/></svg>
</div></body></html>
